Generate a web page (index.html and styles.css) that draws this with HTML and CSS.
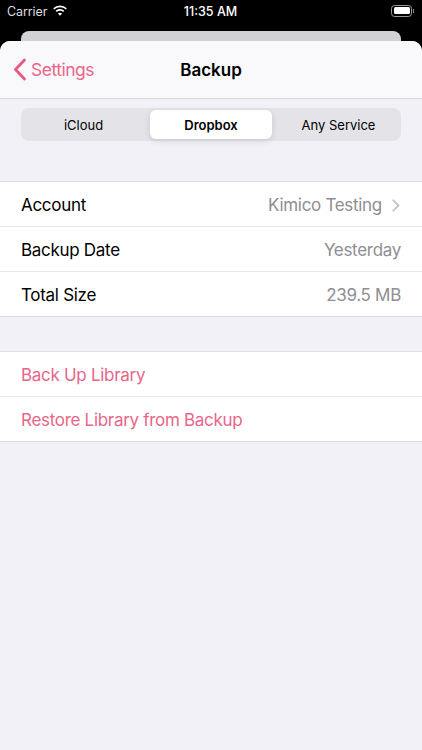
FILE: index.html
```html
<!DOCTYPE html>
<html lang="en">
<head>
<meta charset="utf-8">
<title>Backup</title>
<link rel="stylesheet" href="styles.css">
</head>
<body>
<div class="phone">
  <header class="status">
    <div class="status-left">
      <span>Carrier</span>
      <svg class="wifi" width="16" height="12" viewBox="0 0 16 12"><path d="M8 2.2c2.2 0 4.2.9 5.7 2.3l1.1-1.2A9.9 9.9 0 0 0 8 .5 9.9 9.9 0 0 0 1.2 3.3l1.1 1.2A8.2 8.2 0 0 1 8 2.2z" fill="#fff"/><path d="M8 5.8c1.2 0 2.3.5 3.1 1.2l1.2-1.2A6.2 6.2 0 0 0 8 4.1c-1.7 0-3.2.6-4.3 1.7l1.2 1.2A4.6 4.6 0 0 1 8 5.8z" fill="#fff"/><path d="M8 7.7c-.8 0-1.5.3-2 .8L8 10.7l2-2.2c-.5-.5-1.2-.8-2-.8z" fill="#fff"/></svg>
    </div>
    <span class="clock">11:35 AM</span>
    <div class="battery-wrap">
      <div class="battery"><span class="battery-fill"></span></div>
      <span class="battery-nub"></span>
    </div>
  </header>
  <div class="sheet-behind"></div>
  <main class="sheet">
    <nav class="navbar">
      <a class="back">
        <svg class="chev-back" width="14" height="23" viewBox="0 0 14 23"><path d="M11.5 2 2.5 11.5l9 9.5" fill="none" stroke="#e8587f" stroke-width="2.8" stroke-linecap="round" stroke-linejoin="round"/></svg>
        <span>Settings</span>
      </a>
      <h1 class="title">Backup</h1>
    </nav>
    <div class="segment-wrap">
      <div class="segment">
        <span class="seg">iCloud</span>
        <span class="seg seg-on">Dropbox</span>
        <span class="seg">Any Service</span>
      </div>
    </div>
    <ul class="group group-info">
      <li class="row">
        <span>Account</span>
        <span class="value">Kimico Testing<svg class="chev" width="8" height="13" viewBox="0 0 8 13"><path d="M1.3 1.3 6.5 6.5l-5.2 5.2" fill="none" stroke="#c4c4c7" stroke-width="1.8" stroke-linecap="round" stroke-linejoin="round"/></svg></span>
      </li>
      <li class="row"><span>Backup Date</span><span class="value">Yesterday</span></li>
      <li class="row"><span>Total Size</span><span class="value">239.5 MB</span></li>
    </ul>
    <ul class="group group-actions">
      <li class="row action">Back Up Library</li>
      <li class="row action">Restore Library from Backup</li>
    </ul>
  </main>
</div>
</body>
</html>
```
FILE: styles.css
```css
* { box-sizing: border-box; }
html, body { margin: 0; padding: 0; }
body { width: 422px; height: 750px; overflow: hidden; background: #000; font-family: Inter, "Liberation Sans", sans-serif; }
.phone { width: 422px; height: 750px; display: flex; flex-direction: column; background: #000; }
.status { height: 31px; flex: none; display: grid; grid-template-columns: 1fr auto 1fr; align-items: center; padding: 0 8px 9px 7px; color: #fff; font-size: 12.5px; }
.status-left { display: flex; align-items: center; gap: 5px; color: #ddd; letter-spacing: -0.1px; }
.wifi { margin-top: -1px; }
.clock { font-weight: 500; font-size: 12.5px; }
.battery-wrap { justify-self: end; display: flex; align-items: center; gap: 1px; margin-top: -1px; }
.battery { width: 21px; height: 12px; border: 1px solid #999; border-radius: 3.5px; padding: 1.5px; }
.battery-fill { display: block; height: 100%; background: #fff; border-radius: 1.5px; }
.battery-nub { width: 1px; height: 4px; background: #888; }
.sheet-behind { height: 10px; flex: none; margin: 0 21px; background: #d2d2d6; border-radius: 8px 8px 0 0; }
.sheet { flex: 1; background: #f1f1f7; border-radius: 10px 10px 0 0; overflow: hidden; }
.navbar { height: 58px; background: #f9f9fc; border-bottom: 1px solid #d8d8dc; display: flex; align-items: center; justify-content: center; position: relative; }
.back { position: absolute; left: 13px; top: 17px; display: flex; align-items: center; gap: 4px; color: #e8668a; font-size: 17.5px; letter-spacing: -0.5px; }
.title { margin: 0; font-size: 17px; font-weight: 600; color: #000; }
.segment-wrap { padding: 9px 21px 0; }
.segment { height: 33px; background: #e3e3e8; border-radius: 8px; display: grid; grid-template-columns: 1fr 122px 1fr; column-gap: 4px; padding: 2px 0; align-items: stretch; }
.seg { display: flex; align-items: center; justify-content: center; font-size: 13px; font-weight: 400; color: #000; }
.seg-on { background: #fff; border-radius: 6px; font-weight: 600; box-shadow: 0 2px 6px rgba(0,0,0,.12); }
.group { list-style: none; margin: 0; padding: 0; background: #fff; border-top: 1px solid #e0e0e4; border-bottom: 1px solid #dcdce0; }
.group-info { margin-top: 40px; }
.group-actions { margin-top: 34px; }
.row { height: 45px; display: flex; align-items: center; justify-content: space-between; padding: 2px 21px 0; font-size: 17px; color: #000; letter-spacing: -0.3px; }
.row:first-child { height: 44px; }
.row + .row { box-shadow: inset 0 1px 0 #e8e8ec; }
.value { color: #8e8e93; display: flex; align-items: center; gap: 10px; }
.chev { margin-right: 1px; }
.action { color: #e8668a; }
```
